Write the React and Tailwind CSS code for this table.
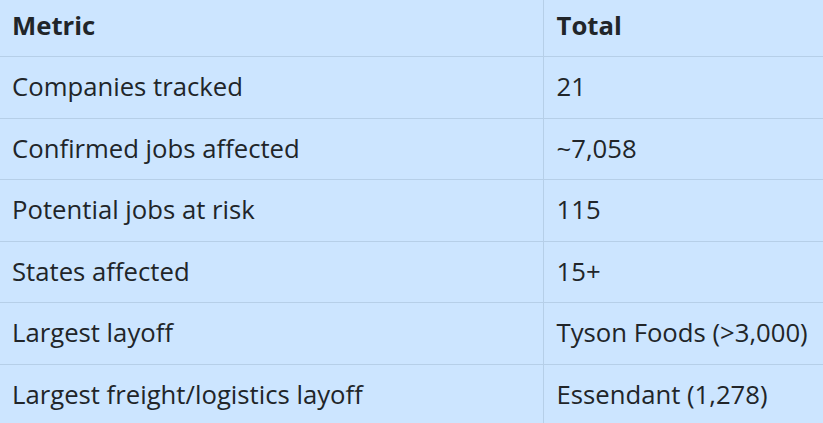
const rows = [
  ["Companies tracked", "21"],
  ["Confirmed jobs affected", "~7,058"],
  ["Potential jobs at risk", "115"],
  ["States affected", "15+"],
  ["Largest layoff", "Tyson Foods (>3,000)"],
  ["Largest freight/logistics layoff", "Essendant (1,278)"],
];

export default function App() {
  return (
    <div className="w-[823px] h-[423px] overflow-hidden bg-[#cce5ff] text-[#212529] font-['Open_Sans',sans-serif]">
      <table className="w-full border-collapse text-[25.7px] leading-[36.6px]">
        <thead>
          <tr className="border-b border-[#b6cfe8]">
            <th className="w-[543px] border-r border-[#b6cfe8] text-left font-bold px-3 pt-[8px] pb-[11.4px]">Metric</th>
            <th className="text-left font-bold px-[13px] pt-[8px] pb-[11.4px]">Total</th>
          </tr>
        </thead>
        <tbody>
          {rows.map(([metric, total]) => (
            <tr key={metric} className="border-b border-[#b6cfe8] last:border-b-0">
              <td className="border-r border-[#b6cfe8] px-3 py-3">{metric}</td>
              <td className="px-[13px] py-3">{total}</td>
            </tr>
          ))}
        </tbody>
      </table>
    </div>
  );
}
